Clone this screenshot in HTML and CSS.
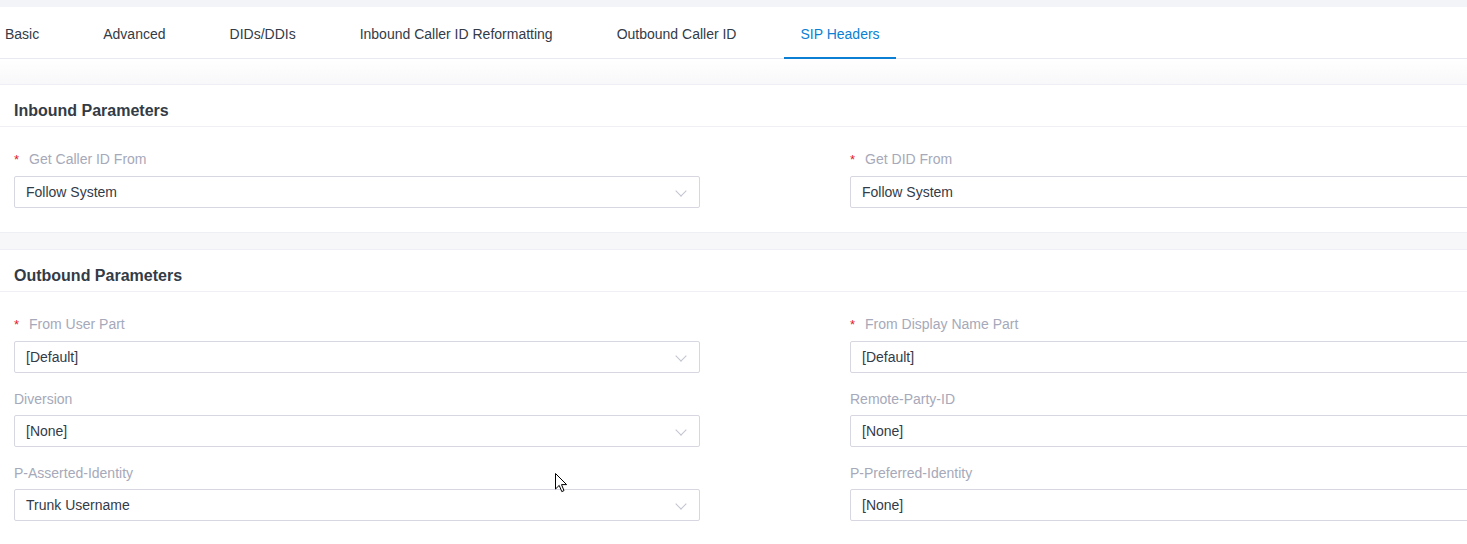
FILE: index.html
```html
<!DOCTYPE html>
<html lang="en">
<head>
    <meta charset="UTF-8">
    <title>Trunk - SIP Headers</title>
    <link rel="stylesheet" href="styles.css">
</head>
<body>
    <div class="page">
        <div class="tabs">
            <div class="tab">Basic</div>
            <div class="tab">Advanced</div>
            <div class="tab">DIDs/DDIs</div>
            <div class="tab">Inbound Caller ID Reformatting</div>
            <div class="tab">Outbound Caller ID</div>
            <div class="tab active">SIP Headers</div>
        </div>

        <div class="spacer top-spacer"></div>

        <div class="card">
            <div class="card-title">Inbound Parameters</div>
            <div class="card-body">
                <div class="field">
                    <div class="label"><span class="req">*</span>Get Caller ID From</div>
                    <div class="select">Follow System<span class="arrow"></span></div>
                </div>
                <div class="field">
                    <div class="label"><span class="req">*</span>Get DID From</div>
                    <div class="select">Follow System<span class="arrow"></span></div>
                </div>
            </div>
        </div>

        <div class="spacer mid-spacer"></div>

        <div class="card">
            <div class="card-title">Outbound Parameters</div>
            <div class="card-body">
                <div class="field">
                    <div class="label"><span class="req">*</span>From User Part</div>
                    <div class="select">[Default]<span class="arrow"></span></div>
                </div>
                <div class="field">
                    <div class="label"><span class="req">*</span>From Display Name Part</div>
                    <div class="select">[Default]<span class="arrow"></span></div>
                </div>
                <div class="field">
                    <div class="label">Diversion</div>
                    <div class="select">[None]<span class="arrow"></span></div>
                </div>
                <div class="field">
                    <div class="label">Remote-Party-ID</div>
                    <div class="select">[None]<span class="arrow"></span></div>
                </div>
                <div class="field">
                    <div class="label">P-Asserted-Identity</div>
                    <div class="select">Trunk Username<span class="arrow"></span></div>
                </div>
                <div class="field">
                    <div class="label">P-Preferred-Identity</div>
                    <div class="select">[None]<span class="arrow"></span></div>
                </div>
            </div>
        </div>
    </div>

    <!-- mouse pointer seen in the screenshot -->
    <svg class="cursor" width="13" height="20" viewBox="0 0 13 20">
        <path d="M0.5 0.5 L0.5 16 L4.2 12.4 L6.8 18.6 L9 17.6 L6.5 11.6 L11.6 11.6 Z" fill="#fff" stroke="#000" stroke-width="1" stroke-linejoin="miter"/>
    </svg>
</body>
</html>
```

FILE: styles.css
```css
body {
    margin: 0;
    padding: 0;
    font-family: "Liberation Sans", Arial, sans-serif;
    font-size: 14px;
    color: #333b47;
    background-color: #f3f4f8;
    overflow: hidden;
    position: relative;
}
.page {
    width: 1560px;
    padding-top: 7px;
}
.tabs {
    display: flex;
    gap: 32px;
    height: 51px;
    padding-left: 0;
    background-color: #fff;
    border-bottom: 1px solid #e9eaf1;
}
.tab {
    padding: 4px 16px 0;
    line-height: 46px;
    height: 46px;
    color: #333b47;
    white-space: nowrap;
    border-bottom: 2px solid transparent;
}
.tab:first-child {
    margin-left: -11px;
}
.tab.active {
    color: #0a7fd3;
    border-bottom-color: #0a7fd3;
}
.spacer {
    border-bottom: 1px solid #eeeff4;
}
.top-spacer {
    height: 25px;
    background: linear-gradient(#ffffff, #f8f8fa);
}
.mid-spacer {
    height: 16px;
    background-color: #f7f7f9;
    border-top: 1px solid #eeeff4;
}
.card {
    background-color: #fff;
}
.card-title {
    height: 25px;
    padding: 16px 0 0 14px;
    line-height: 20px;
    font-size: 16px;
    font-weight: bold;
    color: #333b46;
    border-bottom: 1px solid #eff0f4;
}
.card-body {
    display: grid;
    grid-template-columns: 686px 686px;
    column-gap: 150px;
    row-gap: 16px;
    padding: 22px 14px 24px;
}
.label {
    line-height: 20px;
    margin-bottom: 6px;
    color: #a6a9b9;
}
.req {
    color: #e0202b;
    font-size: 13px;
    margin-right: 10px;
}
.select {
    position: relative;
    height: 30px;
    line-height: 30px;
    padding-left: 11px;
    border: 1px solid #d6d7e1;
    border-radius: 2px;
    color: #333b47;
}
.arrow {
    position: absolute;
    right: 14px;
    top: 10px;
    width: 7px;
    height: 7px;
    border-right: 1px solid #c2c5cf;
    border-bottom: 1px solid #c2c5cf;
    transform: rotate(45deg);
}
.cursor {
    position: absolute;
    left: 555px;
    top: 473px;
}
```
